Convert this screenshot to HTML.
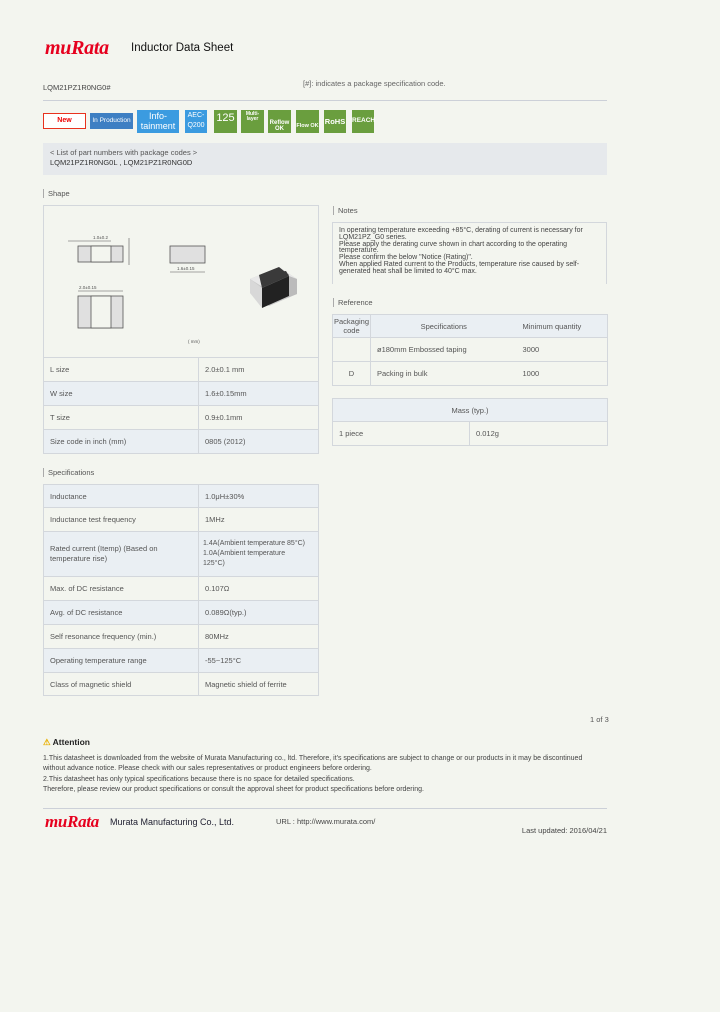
<!DOCTYPE html>
<html><head><meta charset="utf-8"><style>
*{margin:0;padding:0;box-sizing:border-box}
body{width:720px;height:1012px;background:#f3f5ef;font-family:"Liberation Sans",sans-serif;color:#555;font-size:7.5px;position:relative;overflow:hidden}
.a{position:absolute;white-space:nowrap}
.lbl{position:absolute;border-left:1px solid #aaa;padding-left:4px;font-size:7.5px;line-height:9px;color:#555}
table{position:absolute;border-collapse:collapse;font-size:7.5px;color:#555}
td{border:1px solid #d3d7dc;padding:0 6px;vertical-align:middle}
.b{background:#eaeff3}
.logo{font-family:"Liberation Serif",serif;font-style:italic;font-weight:bold;color:#e6001e;letter-spacing:-0.3px}
.bd{position:absolute;color:#fff;font-weight:bold;text-align:center;font-size:7px;line-height:1}
.nl{border-left:none}.nr{border-right:none}
</style></head><body>
<div class="a logo" style="left:45px;top:37px;font-size:20px">muRata</div>
<div class="a" style="left:131px;top:42px;font-size:11.5px;color:#111">Inductor Data Sheet</div>
<div class="a" style="left:43px;top:83px;color:#444">LQM21PZ1R0NG0#</div>
<div class="a" style="left:303px;top:79px;color:#666">[#]: indicates a package specification code.</div>
<div class="a" style="left:43px;top:100px;width:564px;height:1px;background:#ccd0d8"></div>

<div class="bd" style="left:43px;top:113px;width:43px;height:16px;border:1.5px solid #e8321e;background:#fff;color:#e00;line-height:13px">New</div>
<div class="bd" style="left:90px;top:113px;width:43px;height:16px;background:#3e7fc3;font-weight:normal;font-size:6.5px;line-height:16px">In Production</div>
<div class="bd" style="left:137px;top:110px;width:42px;height:23px;background:#3b9be0;font-size:9px;font-weight:normal;line-height:10px;padding-top:1px">Info-<br>tainment</div>
<div class="bd" style="left:185px;top:110px;width:22px;height:23px;background:#3b9be0;font-weight:normal;line-height:10px;padding-top:1px">AEC-<br>Q200</div>
<div class="bd" style="left:214px;top:110px;width:23px;height:23px;background:#6a9e3e;font-size:11px;font-weight:normal;padding-top:3px">125</div>
<div class="bd" style="left:241px;top:110px;width:23px;height:23px;background:#6a9e3e;font-size:5px;padding-top:2px">Multi-<br>layer</div>
<div class="bd" style="left:268px;top:110px;width:23px;height:23px;background:#6a9e3e;font-size:6px;padding-top:10px">Reflow<br>OK</div>
<div class="bd" style="left:296px;top:110px;width:23px;height:23px;background:#6a9e3e;font-size:5.5px;padding-top:14px">Flow OK</div>
<div class="bd" style="left:324px;top:110px;width:22px;height:23px;background:#6a9e3e;font-size:7.5px;padding-top:8px">RoHS</div>
<div class="bd" style="left:352px;top:110px;width:22px;height:23px;background:#6a9e3e;font-size:6.5px;padding-top:8px">REACH</div>

<div class="a" style="left:43px;top:143px;width:564px;height:32px;background:#e6e9ec"></div>
<div class="a" style="left:50px;top:148px">&lt; List of part numbers with package codes &gt;</div>
<div class="a" style="left:50px;top:158px;color:#333">LQM21PZ1R0NG0L , LQM21PZ1R0NG0D</div>

<div class="lbl" style="left:43px;top:189px">Shape</div>
<div class="a" style="left:43px;top:205px;width:276px;height:153px;border:1px solid #d3d7dc;border-bottom:none"></div>
<svg class="a" style="left:43px;top:205px" width="276" height="153">
<g fill="#e0e0e0" stroke="#555" stroke-width="0.8">
<rect x="35" y="41" width="45" height="16"/><rect x="48" y="41" width="20" height="16" fill="#f3f5ef"/>
<rect x="35" y="91" width="45" height="32"/><rect x="48" y="91" width="20" height="32" fill="#f3f5ef"/>
<rect x="127" y="41" width="35" height="17"/></g>
<g stroke="#555" stroke-width="0.6"><line x1="25" y1="36" x2="48" y2="36"/><line x1="48" y1="36" x2="68" y2="36"/><line x1="86" y1="33" x2="86" y2="60"/><line x1="35" y1="86" x2="80" y2="86"/><line x1="127" y1="67" x2="162" y2="67"/></g>
<g font-size="4.5" fill="#555"><text x="50" y="34">1.0±0.2</text><text x="36" y="84">2.0±0.15</text><text x="134" y="65">1.6±0.15</text><text x="145" y="138">( mm)</text></g>
<polygon points="207,74 236,62 254,74 254,89 226,101 207,88" fill="#c8c8c8"/>
<polygon points="207,74 236,62 254,74 226,86" fill="#e8e8e8"/>
<polygon points="216,70 243,66 246,71 219,83" fill="#3a3a3a"/>
<polygon points="216,70 236,62 246,70 226,79" fill="#3a3a3a"/>
<polygon points="219,83 246,71 246,91 219,103" fill="#222"/>
<polygon points="207,74 219,83 219,103 207,88" fill="#d8d8d8"/>
<polygon points="246,71 254,74 254,89 246,92" fill="#bbb"/>
</svg>
<table style="left:43px;top:357px;width:276px">
<tr style="height:24px"><td style="width:155px">L size</td><td>2.0±0.1 mm</td></tr>
<tr style="height:24px" class="b"><td>W size</td><td>1.6±0.15mm</td></tr>
<tr style="height:24px"><td>T size</td><td>0.9±0.1mm</td></tr>
<tr style="height:24px" class="b"><td>Size code in inch (mm)</td><td>0805 (2012)</td></tr>
</table>

<div class="lbl" style="left:333px;top:206px">Notes</div>
<div class="a" style="left:332px;top:222px;width:275px;height:62px;border:1px solid #d3d7dc;border-bottom:none;padding:5px 6px;font-size:7px;line-height:6.8px;white-space:normal;color:#444">In operating temperature exceeding +85°C, derating of current is necessary for LQM21PZ_G0 series.<br>Please apply the derating curve shown in chart according to the operating temperature.<br>Please confirm the below "Notice (Rating)".<br>When applied Rated current to the Products, temperature rise caused by self-generated heat shall be limited to 40°C max.</div>

<div class="lbl" style="left:333px;top:298px">Reference</div>
<table style="left:332px;top:314px;width:276px;text-align:left">
<tr style="height:23px" class="b"><td style="width:38px;text-align:center;padding:0;line-height:9px">Packaging<br>code</td><td class="nr" style="text-align:center;width:146px">Specifications</td><td class="nl">Minimum quantity</td></tr>
<tr style="height:24px"><td></td><td class="nr">ø180mm Embossed taping</td><td class="nl">3000</td></tr>
<tr style="height:24px"><td style="text-align:center">D</td><td class="nr">Packing in bulk</td><td class="nl">1000</td></tr>
</table>
<table style="left:332px;top:398px;width:276px">
<tr style="height:23px" class="b"><td colspan="2" style="text-align:center">Mass (typ.)</td></tr>
<tr style="height:24px"><td style="width:137px">1 piece</td><td>0.012g</td></tr>
</table>

<div class="lbl" style="left:43px;top:468px">Specifications</div>
<table style="left:43px;top:484px;width:276px">
<tr style="height:23px" class="b"><td style="width:155px">Inductance</td><td>1.0μH±30%</td></tr>
<tr style="height:24px"><td>Inductance test frequency</td><td>1MHz</td></tr>
<tr style="height:45px" class="b"><td style="line-height:10px">Rated current (Itemp) (Based on temperature rise)</td><td style="line-height:10px;white-space:nowrap;padding:0 4px;font-size:7px">1.4A(Ambient temperature 85°C)<br>1.0A(Ambient temperature<br>125°C)</td></tr>
<tr style="height:24px"><td>Max. of DC resistance</td><td>0.107Ω</td></tr>
<tr style="height:24px" class="b"><td>Avg. of DC resistance</td><td>0.089Ω(typ.)</td></tr>
<tr style="height:24px"><td>Self resonance frequency (min.)</td><td>80MHz</td></tr>
<tr style="height:24px" class="b"><td>Operating temperature range</td><td>-55~125°C</td></tr>
<tr style="height:23px"><td>Class of magnetic shield</td><td>Magnetic shield of ferrite</td></tr>
</table>

<div class="a" style="left:590px;top:715px">1 of 3</div>
<div class="a" style="left:43px;top:737px;font-size:8.5px;font-weight:bold;color:#222"><span style="color:#e8b000">⚠</span> Attention</div>
<div class="a" style="left:43px;top:754px;font-size:7px;line-height:10.3px;color:#444">1.This datasheet is downloaded from the website of Murata Manufacturing co., ltd. Therefore, it's specifications are subject to change or our products in it may be discontinued<br>without advance notice. Please check with our sales representatives or product engineers before ordering.<br>2.This datasheet has only typical specifications because there is no space for detailed specifications.<br>Therefore, please review our product specifications or consult the approval sheet for product specifications before ordering.</div>
<div class="a" style="left:43px;top:808px;width:564px;height:1px;background:#ccd0d8"></div>
<div class="a logo" style="left:45px;top:812px;font-size:17px">muRata</div>
<div class="a" style="left:110px;top:817px;font-size:9px;color:#223">Murata Manufacturing Co., Ltd.</div>
<div class="a" style="left:276px;top:817px;color:#444">URL : http://www.murata.com/</div>
<div class="a" style="right:113px;top:826px;color:#444">Last updated: 2016/04/21</div>
</body></html>
